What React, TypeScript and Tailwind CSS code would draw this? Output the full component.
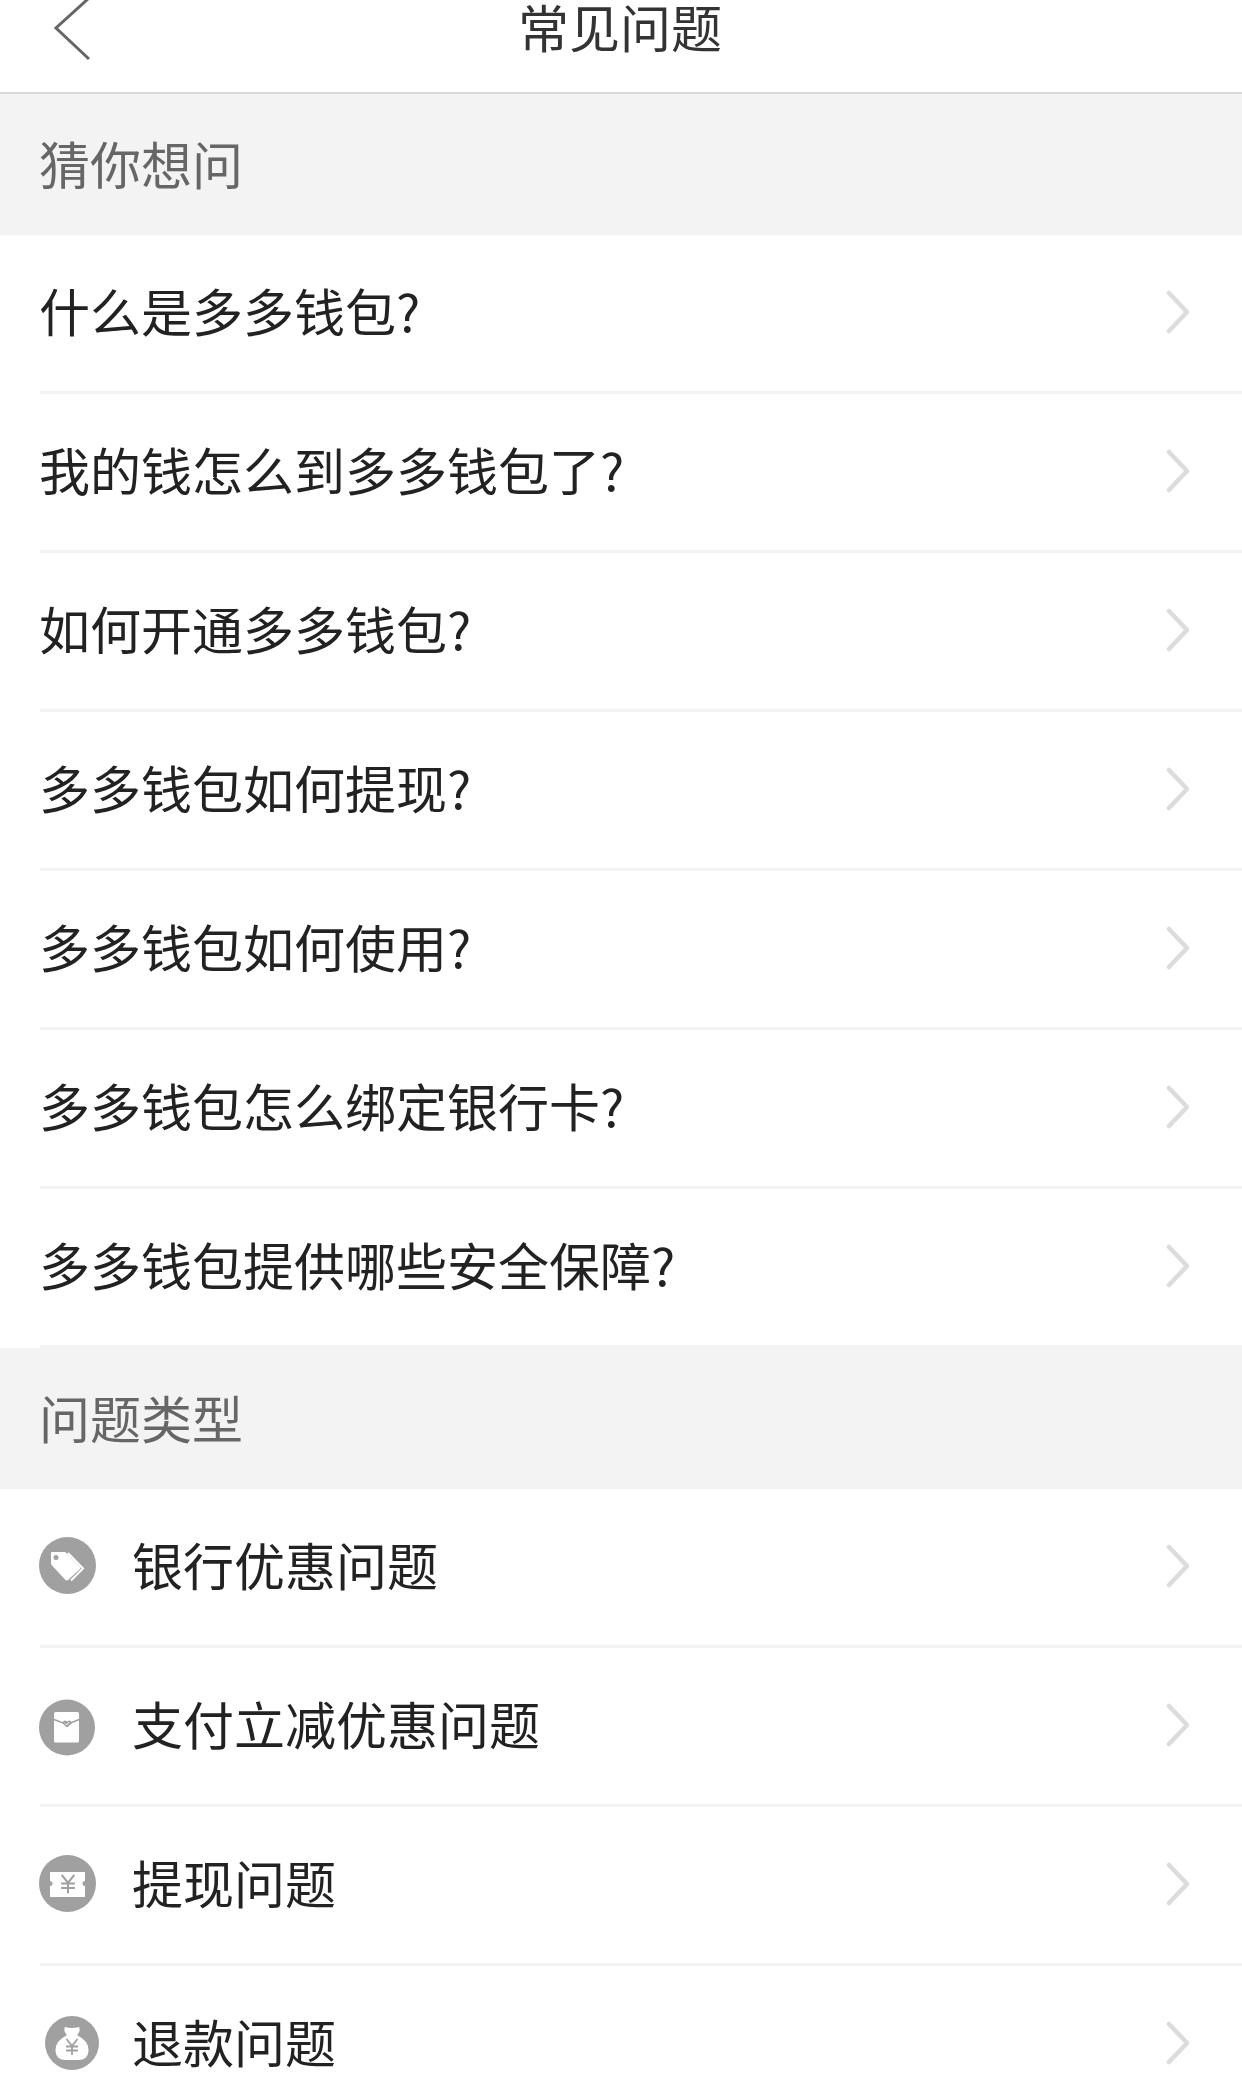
const font = { fontFamily: '"Noto Sans CJK SC", sans-serif' };

const guesses = [
  "什么是多多钱包?",
  "我的钱怎么到多多钱包了?",
  "如何开通多多钱包?",
  "多多钱包如何提现?",
  "多多钱包如何使用?",
  "多多钱包怎么绑定银行卡?",
  "多多钱包提供哪些安全保障?",
];

function Chevron() {
  return (
    <svg width="26" height="46" viewBox="0 0 26 46" fill="none" className="-mt-[2px] shrink-0">
      <path d="M4 4 L22 23 L4 42" stroke="#dcdcdc" strokeWidth="4.5" strokeLinecap="round" strokeLinejoin="round" />
    </svg>
  );
}

function Yen({ x, y, scale = 1 }: { x: number; y: number; scale?: number }) {
  return (
    <g transform={`translate(${x} ${y}) scale(${scale})`} stroke="#a0a0a0" strokeWidth="1.800" fill="none">
      <path d="M-5.500 -8 L0 -1 L5.500 -8" />
      <path d="M-6 -0.500 H6 M-6 3.500 H6 M0 -1 V8" />
    </g>
  );
}

function TagIcon() {
  return (
    <svg width="57" height="57" viewBox="0 0 57 57">
      <circle cx="28.500" cy="28.500" r="28.500" fill="#a0a0a0" />
      <path d="M13 15 H25 Q26.500 15 27.500 16 L41 30 Q42 31 41 32 L29 43 Q28 44 26.500 43 L13.500 29 Q12 28 12 26 V16 Q12 15 13 15 Z" fill="#fff" />
      <circle cx="17" cy="20.500" r="2.500" fill="#a0a0a0" />
      <path d="M29 16 L44 31.500 L32 43.500" fill="none" stroke="#fff" strokeWidth="2" />
    </svg>
  );
}

function EnvelopeIcon() {
  return (
    <svg width="57" height="57" viewBox="0 0 57 57">
      <circle cx="28" cy="28.500" r="28" fill="#a0a0a0" />
      <rect x="15" y="13" width="25" height="30.500" rx="1.500" fill="#fff" />
      <path d="M15 20.500 L28 25.500 L40 20.500" fill="none" stroke="#a0a0a0" strokeWidth="1.400" />
      <path d="M28 28.500 L23.500 24.500 Q24 21.500 26 21.500 L28 22.500 L30 21.500 Q32.500 21.500 32.500 24.500 Z" fill="#a0a0a0" />
      <path d="M26 24.500 L27.500 26 L30 23" fill="none" stroke="#fff" strokeWidth="1" />
    </svg>
  );
}

function TicketIcon() {
  return (
    <svg width="57" height="57" viewBox="0 0 57 57">
      <circle cx="28.500" cy="28.500" r="28.500" fill="#a0a0a0" />
      <path d="M11 17 H46 V26 A2.500 2.500 0 0 0 46 31 V42 H11 V31 A2.500 2.500 0 0 0 11 26 Z" fill="#fff" />
      <Yen x={29} y={29} scale={1.150} />
    </svg>
  );
}

function BagIcon() {
  return (
    <svg width="54" height="54" viewBox="0 0 54 54">
      <circle cx="27" cy="27" r="27" fill="#a0a0a0" />
      <path d="M20 11 Q27 13 34 11 Q36 15 32 19 Q44 25 43.500 35 Q43 44 33 44 H21 Q11 44 10.500 35 Q10 25 22 19 Q18 15 20 11 Z" fill="#fff" />
      <Yen x={27} y={31} />
    </svg>
  );
}

const types = [
  { label: "银行优惠问题", icon: <TagIcon />, slot: "-mt-[3px] -ml-px" },
  { label: "支付立减优惠问题", icon: <EnvelopeIcon />, slot: "mt-[2px] -ml-px" },
  { label: "提现问题", icon: <TicketIcon />, slot: "-mt-[4px] -ml-px" },
  { label: "退款问题", icon: <BagIcon />, slot: "-mt-[2px] ml-[5px]" },
];

function SectionTitle({ children }: { children: string }) {
  return (
    <div className="flex h-[141px] items-center bg-[#f3f3f3] pl-[39px] text-[51px] text-[#666]">
      <span className="-mt-[2px]">{children}</span>
    </div>
  );
}

export default function App() {
  return (
    <div className="h-[2096px] overflow-hidden bg-white" style={font}>
      <div className="grid h-[94px] grid-cols-[1fr_auto_1fr] border-b-2 border-[#d9d9d9]">
        <svg width="40" height="62" viewBox="0 0 40 62" fill="none" className="ml-[52px]">
          <path d="M37 -2 L4 28 L37 59" stroke="#666" strokeWidth="3" />
        </svg>
        <div className="-ml-[2px] h-[52px] text-[51px] leading-[52px] text-[#333]">常见问题</div>
      </div>

      <SectionTitle>猜你想问</SectionTitle>
      {guesses.map((q) => (
        <div key={q} className="pl-[40px]">
          <div className="flex h-[159px] items-center justify-between border-b-[3px] border-[#f3f3f3] pr-[51px]">
            <span className="-mt-[6px] -ml-px text-[51px] text-[#222]">{q}</span>
            <Chevron />
          </div>
        </div>
      ))}

      <SectionTitle>问题类型</SectionTitle>
      {types.map((t) => (
        <div key={t.label} className="pl-[40px]">
          <div className="flex h-[159px] items-center justify-between border-b-[3px] border-[#f3f3f3] pr-[51px]">
            <div className="flex items-center">
              <div className="w-[93px] shrink-0">
                <div className={`w-fit ${t.slot}`}>{t.icon}</div>
              </div>
              <span className="-mt-[6px] -ml-px text-[51px] text-[#222]">{t.label}</span>
            </div>
            <Chevron />
          </div>
        </div>
      ))}
    </div>
  );
}
